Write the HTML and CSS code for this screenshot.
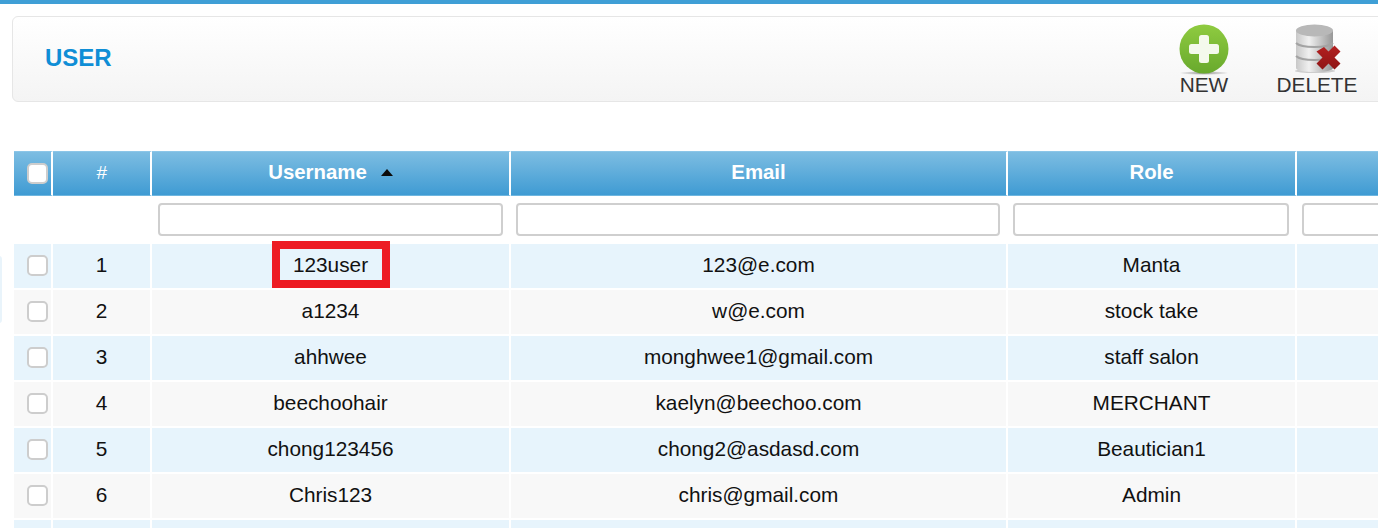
FILE: index.html
```html
<!DOCTYPE html>
<html lang="en">
<head>
<meta charset="utf-8">
<title>User</title>
<link rel="stylesheet" href="styles.css">
</head>
<body>
<div class="edge-tab"></div>
<header class="toolbar">
  <h1 class="title">USER</h1>
  <div class="actions">
    <a class="action action-new">
      <svg class="icon" viewBox="0 0 52 54" width="52" height="54" aria-hidden="true">
        <defs>
          <linearGradient id="ng" x1="0" y1="0" x2="0" y2="1">
            <stop offset="0" stop-color="#8fcb40"/><stop offset="1" stop-color="#68a92d"/>
          </linearGradient>
          <radialGradient id="ns" cx=".5" cy=".5" r=".5">
            <stop offset="0" stop-color="#555" stop-opacity=".65"/><stop offset="1" stop-color="#555" stop-opacity="0"/>
          </radialGradient>
        </defs>
        <ellipse cx="26" cy="49" rx="25" ry="2" fill="url(#ns)"/>
        <circle cx="26" cy="25" r="24.500" fill="url(#ng)"/>
        <rect x="11" y="20" width="30" height="10" rx="2.500" fill="#f4f9ec"/>
        <rect x="21" y="11" width="10" height="28" rx="2.500" fill="#f4f9ec"/>
      </svg>
      <span class="action-label">NEW</span>
    </a>
    <a class="action action-delete">
      <svg class="icon" viewBox="0 0 52 54" width="52" height="54" aria-hidden="true">
        <defs>
          <linearGradient id="dg" x1="0" y1="0" x2="1" y2="0">
            <stop offset="0" stop-color="#c8c8c8"/><stop offset=".35" stop-color="#f0f0f0"/><stop offset="1" stop-color="#979797"/>
          </linearGradient>
          <linearGradient id="dx" x1="0" y1="0" x2="0" y2="1">
            <stop offset="0" stop-color="#b32020"/><stop offset="1" stop-color="#8f1515"/>
          </linearGradient>
        </defs>
        <ellipse cx="24" cy="47" rx="20" ry="2" fill="#999" opacity=".45"/>
        <path d="M5 7h37v37c0 2.500-8 4-18.500 4s-18.500-1.500-18.500-4z" fill="url(#dg)"/>
        <ellipse cx="23.500" cy="6.500" rx="18.500" ry="6" fill="#b8b8b8"/>
        <path d="M5 19c3 3 10 4 18.500 4s15.500-1 18.500-4M5 32c3 3 10 4 18.500 4s15.500-1 18.500-4" fill="none" stroke="#a3a3a3" stroke-width="2"/>
        <path d="M33 22l4.500 4.500 6-6 6 6-6 6 6 6-6 6-6-6-6 6-6-6 6-6-6-6z" transform="translate(0 1)" fill="url(#dx)"/>
      </svg>
      <span class="action-label">DELETE</span>
    </a>
  </div>
</header>
<div class="grid-wrap">
<table class="grid">
  <colgroup>
    <col class="c-check"><col class="c-num"><col class="c-user"><col class="c-email"><col class="c-role"><col class="c-rest">
  </colgroup>
  <thead>
    <tr class="head">
      <th class="check"><span class="cb"></span></th>
      <th class="hash">#</th>
      <th>Username<span class="sort"></span></th>
      <th>Email</th>
      <th>Role</th>
      <th></th>
    </tr>
    <tr class="filters">
      <td></td><td></td>
      <td class="first-filter"><input class="filter" type="text"></td>
      <td><input class="filter" type="text"></td>
      <td><input class="filter" type="text"></td>
      <td><input class="filter" type="text"></td>
    </tr>
  </thead>
  <tbody>
    <tr class="odd"><td class="check"><span class="cb"></span></td><td>1</td><td class="marked"><span class="mark">123user</span></td><td>123@e.com</td><td>Manta</td><td></td></tr>
    <tr class="even"><td class="check"><span class="cb"></span></td><td>2</td><td>a1234</td><td>w@e.com</td><td>stock take</td><td></td></tr>
    <tr class="odd"><td class="check"><span class="cb"></span></td><td>3</td><td>ahhwee</td><td>monghwee1@gmail.com</td><td>staff salon</td><td></td></tr>
    <tr class="even"><td class="check"><span class="cb"></span></td><td>4</td><td>beechoohair</td><td>kaelyn@beechoo.com</td><td>MERCHANT</td><td></td></tr>
    <tr class="odd"><td class="check"><span class="cb"></span></td><td>5</td><td>chong123456</td><td>chong2@asdasd.com</td><td>Beautician1</td><td></td></tr>
    <tr class="even"><td class="check"><span class="cb"></span></td><td>6</td><td>Chris123</td><td>chris@gmail.com</td><td>Admin</td><td></td></tr>
    <tr class="odd"><td></td><td></td><td></td><td></td><td></td><td></td></tr>
  </tbody>
</table>
</div>
</body>
</html>
```

FILE: styles.css
```css
* { box-sizing: border-box; }
html, body { margin: 0; height: 528px; overflow: hidden; background: #fff; }
body {
  position: relative;
  width: 1378px;
  border-top: 4px solid #3f9fd6;
  padding: 12px 0 0 12px;
  font-family: "Liberation Sans", Arial, sans-serif;
  color: #111;
}
.edge-tab {
  position: absolute;
  left: -4px;
  top: 252px;
  width: 6px;
  height: 67px;
  border-radius: 4px;
  background: #e9f4fb;
}
.toolbar {
  display: flex;
  justify-content: space-between;
  width: 1380px;
  height: 86px;
  border: 1px solid #e6e6e6;
  border-radius: 6px;
  background: linear-gradient(#ffffff, #f4f4f4);
}
.title {
  margin: 0;
  padding: 27px 0 0 32px;
  font-size: 24px;
  line-height: 28px;
  font-weight: bold;
  color: #0f8ed6;
}
.actions { display: flex; padding: 7px 0 0 0; margin-right: 33px; }
.action { display: flex; flex-direction: column; align-items: center; }
.action-new { width: 50px; margin-right: 47px; }
.action-delete { width: 82px; }
.icon { display: block; flex: none; filter: blur(.6px); }
.action-label {
  margin-top: -5px;
  font-size: 20.8px;
  line-height: 24px;
  color: #333;
  white-space: nowrap;
}
.grid-wrap { margin: 49px 0 0 2px; }
.grid {
  table-layout: fixed;
  border-collapse: separate;
  border-spacing: 0;
  width: 1400px;
  font-size: 20.8px;
}
.c-check { width: 39px; }
.c-num { width: 99px; }
.c-user { width: 359px; }
.c-email { width: 497px; }
.c-role { width: 289px; }
.c-rest { width: 117px; }
.grid th, .grid td {
  padding: 0;
  text-align: center;
  vertical-align: middle;
  border-right: 2px solid #fff;
  overflow: hidden;
  white-space: nowrap;
}
.head th {
  height: 45px;
  padding-bottom: 2px;
  background: linear-gradient(#7dbde2, #3f9bd3);
  border-top: 1px solid #8cc6e8;
  border-bottom: 1px solid #6fb6df;
  color: #fff;
  font-size: 20.4px;
  font-weight: bold;
}
.head .hash { font-weight: normal; font-style: italic; font-size: 19px; }
.grid .filters td { height: 48px; padding: 0 6px 2px 5px; }
.grid .filters .first-filter { padding-left: 6px; }
.filter {
  display: block;
  width: 100%;
  height: 33px;
  margin: 0;
  padding: 0 6px;
  background: #fff;
  border: 2px solid #cfcfcf;
  border-radius: 4px;
  outline: none;
}
.grid tbody td { height: 46px; padding-bottom: 2px; border-bottom: 2px solid #fff; }
.grid .check { padding-left: 10px; padding-bottom: 1px; }
.grid tbody .marked { overflow: visible; padding-bottom: 0; }
.odd td { background: #e7f4fc; }
.even td { background: #f8f8f8; }
.cb {
  display: block;
  width: 21px;
  height: 21px;
  margin: 0 auto;
  border: 2px solid #cdcdcd;
  border-radius: 5px;
  background: #fff;
}
.sort {
  display: inline-block;
  margin-left: 14px;
  vertical-align: 3px;
  border-left: 6.500px solid transparent;
  border-right: 6.500px solid transparent;
  border-bottom: 7px solid #0b0b0b;
}
.mark {
  display: block;
  width: 118px;
  height: 47px;
  line-height: 31px;
  margin: -3px auto 0;
  border: 8px solid #ed1c24;
  text-align: center;
}
```
